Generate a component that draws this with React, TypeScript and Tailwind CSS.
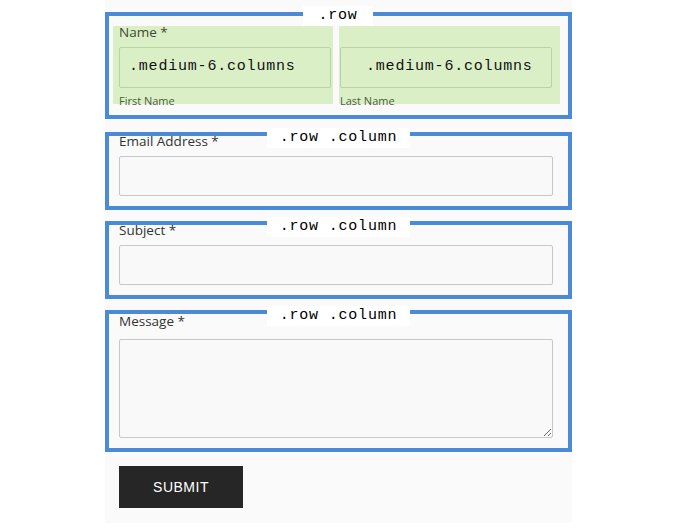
import React from 'react';

const mono = { fontFamily: '"Liberation Mono", "DejaVu Sans Mono", monospace' };
const sans = { fontFamily: '"Open Sans", "Liberation Sans", Arial, sans-serif' };

function Tab({ text, className }: { text: string; className: string }) {
  return (
    <div
      className={`absolute bg-white text-black text-[15px] tracking-[0.8px] leading-[20px] h-[20px] flex items-center justify-center ${className}`}
      style={mono}
    >
      {text}
    </div>
  );
}

function Field({ label, tall }: { label: string; tall?: boolean }) {
  return (
    <div className="relative border-4 border-[#4a8ad6] pl-[10px] pr-[15px] pb-[10px]">
      <Tab text=".row .column" className="left-[158px] top-[-8px] w-[143px]" />
      <label
        className={`block text-[13.5px] leading-[10px] text-[#333] ${tall ? 'h-[25px] pt-[2px]' : 'h-[20px]'}`}
        style={sans}
      >
        {label} *
      </label>
      {tall ? (
        <textarea className="block w-full h-[99px] bg-[#f9f9f9] border border-[#c8c8c8] rounded-[2px] resize" />
      ) : (
        <input className="block w-full h-[40px] bg-[#f9f9f9] border border-[#c8c8c8] rounded-[2px]" />
      )}
    </div>
  );
}

export default function App() {
  return (
    <div className="min-h-screen bg-white" style={sans}>
      <form className="ml-[105px] w-[467px] bg-[#fafafa] pt-[12px] pb-[15px]">
        {/* Name row */}
        <div className="relative border-4 border-[#4a8ad6] pl-[4px] pr-[8px] pt-[10px] pb-[11px] flex gap-[6px]">
          <Tab text=".row" className="left-[194px] top-[-10px] w-[70px]" />
          <div className="flex-1 h-[78px] bg-[#dbefc6] pl-[6px] pr-[2px]">
            <label className="block h-[21px] pt-[1px] text-[13.5px] leading-[11px] text-[#3c4a30]">Name *</label>
            <div
              className="h-[41px] border border-[#b9d4a2] rounded-[2px] flex items-center pl-[9px] text-[15px] tracking-[0.8px] text-[#111]"
              style={mono}
            >
              .medium-6.columns
            </div>
            <div className="text-[11px] leading-[12px] mt-[7px] text-[#4b5d3c]">First Name</div>
          </div>
          <div className="flex-1 h-[78px] bg-[#dbefc6] pl-[1px] pr-[8px]">
            <div className="h-[21px]" />
            <div
              className="h-[41px] border border-[#b9d4a2] rounded-[2px] flex items-center pl-[25px] text-[15px] tracking-[0.8px] text-[#111]"
              style={mono}
            >
              .medium-6.columns
            </div>
            <div className="text-[11px] leading-[12px] mt-[7px] text-[#4b5d3c]">Last Name</div>
          </div>
        </div>

        <div className="mt-[13px] flex flex-col gap-[11px]">
          <Field label="Email Address" />
          <Field label="Subject" />
          <Field label="Message" tall />
        </div>

        <div className="pl-[14px] mt-[14px]">
          <button
            type="button"
            className="w-[124px] h-[42px] bg-[#262626] text-white text-[14px] font-medium tracking-[0.5px]"
            style={{ fontFamily: '"Liberation Sans", Arial, sans-serif' }}
          >
            SUBMIT
          </button>
        </div>
      </form>
    </div>
  );
}
